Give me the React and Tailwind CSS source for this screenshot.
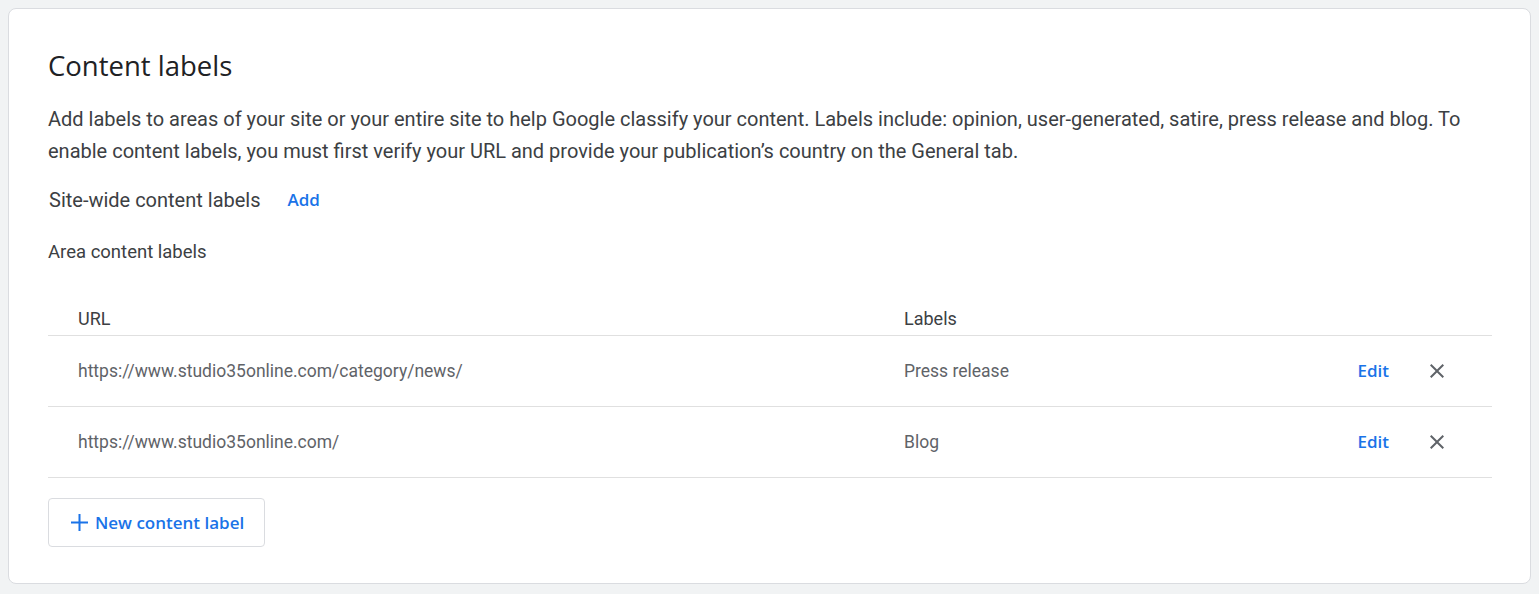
const rows = [
  { url: 'https://www.studio35online.com/category/news/', label: 'Press release' },
  { url: 'https://www.studio35online.com/', label: 'Blog' },
];

const sans = "font-['Open_Sans',Roboto,sans-serif]";

function CloseIcon() {
  return (
    <svg width="24" height="24" viewBox="0 0 24 24" aria-hidden="true" className="fill-[#5f6368]">
      <path d="M19 6.41L17.59 5 12 10.59 6.41 5 5 6.41 10.59 12 5 17.59 6.41 19 12 13.41 17.59 19 19 17.59 13.41 12z" />
    </svg>
  );
}

export default function App() {
  return (
    <div className="min-h-[594px] bg-[#f1f3f4] p-2 font-['Roboto',sans-serif]">
      <section className="rounded-lg border border-[#dadce0] bg-white pl-[39px] pr-[38px] pt-[41px] pb-[36px]">
        <h2 className={`${sans} text-[27.5px] leading-8 text-[#202124]`}>Content labels</h2>
        <p className="mt-[21px] text-[20px] leading-8 text-[#3c4043]">
          Add labels to areas of your site or your entire site to help Google classify your content. Labels include: opinion, user-generated, satire, press release and blog. To enable content labels, you must first verify your URL and provide your publication’s country on the General tab.
        </p>
        <div className="mt-[17px] flex items-center">
          <span className="pl-px text-[20px] leading-8 text-[#3c4043]">Site-wide content labels</span>
          <button type="button" className={`${sans} ml-[27px] text-[17px] font-semibold text-[#1a73e8]`}>Add</button>
        </div>
        <p className="mt-[24px] text-[18.5px] leading-6 text-[#3c4043]">Area content labels</p>

        <div className="mt-[43px]">
          <div className="flex border-b border-[#e0e0e0] pb-[4px] text-[18px] leading-6 text-[#3c4043]">
            <div className="w-[856px] pl-[30px]">URL</div>
            <div className="flex-1">Labels</div>
          </div>
          {rows.map((row) => (
            <div key={row.url} className="flex h-[71px] items-center border-b border-[#e0e0e0] text-[17.5px] text-[#5f6368]">
              <div className="w-[856px] pl-[30px]">{row.url}</div>
              <div className="flex-1">{row.label}</div>
              <button type="button" className={`${sans} text-[17px] font-semibold text-[#1a73e8]`}>Edit</button>
              <button type="button" className="ml-[36px] mr-[43px]" aria-label="Remove">
                <CloseIcon />
              </button>
            </div>
          ))}
        </div>

        <button
          type="button"
          className={`${sans} mt-[20px] flex h-[49px] items-center gap-[6px] rounded-[4px] border border-[#dadce0] pl-[21px] pr-[20px] text-[17px] font-semibold text-[#1a73e8]`}
        >
          <svg width="19" height="19" viewBox="0 0 19 19" aria-hidden="true">
            <path d="M9.5 1v17M1 9.5h17" stroke="#1a73e8" strokeWidth="2" />
          </svg>
          New content label
        </button>
      </section>
    </div>
  );
}
